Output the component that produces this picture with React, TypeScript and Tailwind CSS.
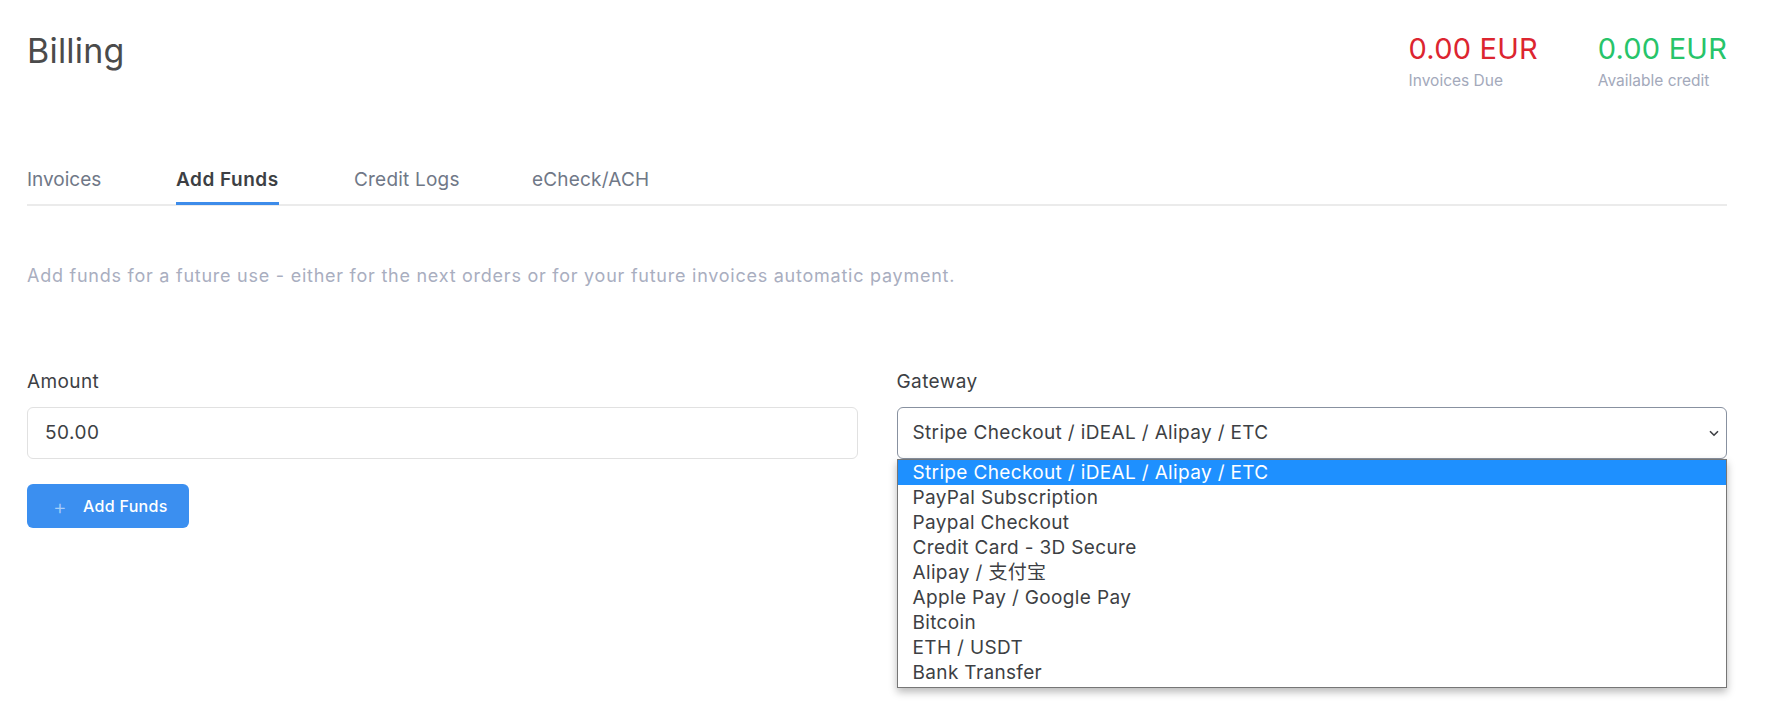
import React from "react";

const options = [
  "Stripe Checkout / iDEAL / Alipay / ETC",
  "PayPal Subscription",
  "Paypal Checkout",
  "Credit Card - 3D Secure",
  "Alipay / 支付宝",
  "Apple Pay / Google Pay",
  "Bitcoin",
  "ETH / USDT",
  "Bank Transfer",
];

export default function App() {
  return (
    <div
      className="w-[1785px] h-[714px] bg-white overflow-hidden"
      style={{ fontFamily: 'Inter, "Noto Sans CJK SC", sans-serif' }}
    >
      <div className="pl-[27px] pr-[58px]">
        {/* Header */}
        <div className="flex items-start justify-between pt-[31px]">
          <h1 className="text-[34px] leading-[40px] tracking-[0.2px] text-[#4b4b4b] font-normal">Billing</h1>
          <div className="flex gap-[60px] pt-[1px]">
            <div className="flex flex-col">
              <span className="text-[29px] leading-[34px] tracking-[0.2px] text-[#dc2530]">0.00 EUR</span>
              <span className="text-[15.5px] leading-[18px] mt-[6px] text-[#a3a9bb]">Invoices Due</span>
            </div>
            <div className="flex flex-col">
              <span className="text-[29px] leading-[34px] tracking-[0.2px] text-[#27c46a]">0.00 EUR</span>
              <span className="text-[15.5px] leading-[18px] mt-[6px] text-[#a3a9bb]">Available credit</span>
            </div>
          </div>
        </div>

        {/* Tabs */}
        <div className="mt-[77px] flex border-b-2 border-[#ebebeb] text-[19px] leading-[26px]">
          <div className="w-[149px] shrink-0">
            <div className="inline-block pb-[11px] text-[#707887]">Invoices</div>
          </div>
          <div className="w-[178px] shrink-0 -mb-[2px]">
            <div className="inline-block pb-[9px] text-[#3d3f44] font-semibold tracking-[0.5px] border-b-[3px] border-[#3d8cea]">Add Funds</div>
          </div>
          <div className="w-[178px] shrink-0">
            <div className="inline-block pb-[11px] text-[#707887] tracking-[0.2px]">Credit Logs</div>
          </div>
          <div>
            <div className="inline-block pb-[11px] text-[#707887] tracking-[0.2px]">eCheck/ACH</div>
          </div>
        </div>

        {/* Description */}
        <p className="mt-[58px] text-[18px] leading-[24px] tracking-[0.75px] text-[#a9aebf]">
          Add funds for a future use - either for the next orders or for your future invoices automatic payment.
        </p>

        {/* Form */}
        <div className="mt-[81px] grid grid-cols-2 gap-[39px]">
          <div className="flex flex-col">
            <label className="text-[19px] leading-[26px] tracking-[0.4px] text-[#3d3f44]">Amount</label>
            <div className="mt-[12px] h-[52px] rounded-[6px] border border-[#e1e1e1] flex items-center pl-[17px] text-[19px] tracking-[0.5px] text-[#3d3f44]">
              50.00
            </div>
            <button className="mt-[25px] w-[162px] h-[44px] rounded-[6px] bg-[#3b8ff0] text-white flex items-center pl-[26px] text-[16px] tracking-[0.3px] font-medium">
              <span className="text-[#a6cdf8] text-[21px] font-light mr-[16px] leading-none">+</span>
              Add Funds
            </button>
          </div>
          <div className="flex flex-col">
            <label className="text-[19px] leading-[26px] tracking-[0.4px] text-[#3d3f44]">Gateway</label>
            <div className="relative mt-[12px]">
              <div className="h-[52px] rounded-[6px] border border-[#8891a0] flex items-center justify-between pl-[15px] pr-[6px] text-[19px] tracking-[0.35px] text-[#3d3f44]">
                <span>Stripe Checkout / iDEAL / Alipay / ETC</span>
                <svg width="10" height="7" viewBox="0 0 10 7" className="mr-[1px]">
                  <path d="M1 1.2 L5 5.2 L9 1.2" fill="none" stroke="#3d3f44" strokeWidth="1.6" />
                </svg>
              </div>
              <div className="absolute left-0 right-0 top-[52px] bg-white border border-[#767676] shadow-[0_4px_8px_rgba(0,0,0,0.28)] text-[19px] tracking-[0.35px] text-[#3d3f44] z-10 pb-[2px]">
                {options.map((o, i) => (
                  <div
                    key={o}
                    className={
                      i === 0
                        ? "bg-[#1e90ff] text-white pl-[15px] h-[25px] leading-[25px]"
                        : "pl-[15px] h-[25px] leading-[25px]"
                    }
                  >
                    {o}
                  </div>
                ))}
              </div>
            </div>
          </div>
        </div>
      </div>
    </div>
  );
}
